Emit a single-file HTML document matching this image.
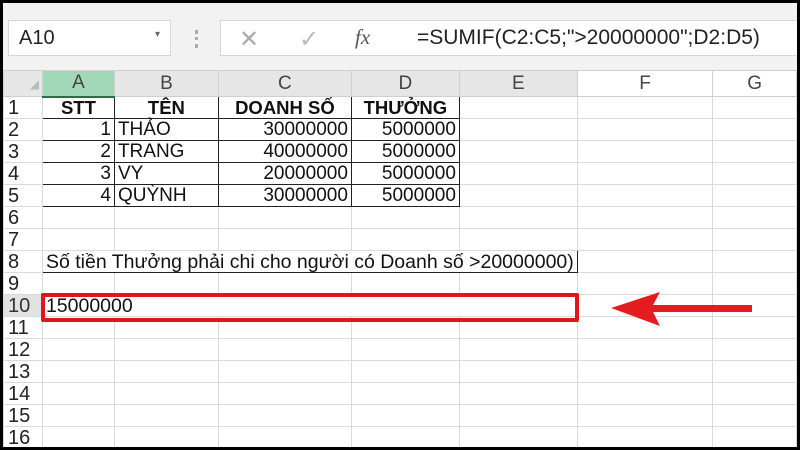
<!DOCTYPE html>
<html><head><meta charset="utf-8"><style>
*{margin:0;padding:0;box-sizing:border-box}
body{width:800px;height:450px;background:#000;position:relative;overflow:hidden;font-family:"Liberation Sans",Arial,sans-serif}
#frame{position:absolute;left:3px;top:3px;width:794px;height:444px;background:#fff;overflow:hidden}
#bar{position:absolute;left:0;top:0;width:794px;height:67px;background:#f2f2f2}
.box{position:absolute;background:#fff;border:1px solid #d6d6d6}
table{position:absolute;left:0;top:67px;border-collapse:collapse;table-layout:fixed}
td{height:22px;border:1px solid #dadada;font-size:19px;color:#111;padding:0 3px;white-space:nowrap;overflow:visible;line-height:20px}
tr.h td{height:26px;background:#e6e6e6;text-align:center;color:#444;font-size:19px;border-color:#cfcfcf}
td.r{text-align:left;padding-left:4px;font-size:20px;color:#222;border-color:#dadada}
.b{font-weight:bold;text-align:center;font-size:18.5px}
.n{text-align:right}
.k{border:1px solid #222 !important}
</style></head><body>
<div id="frame">
<div id="bar">
 <div class="box" style="left:5px;top:17px;width:163px;height:36px"><span style="position:absolute;left:10px;top:6px;font-size:20px;color:#222">A10</span><span style="position:absolute;left:146px;top:8px;font-size:10px;color:#666">▾</span></div>
 <div style="position:absolute;left:192px;top:27px;width:3px;height:18px;border-left:3px dotted #aaa"></div>
 <div class="box" style="left:217px;top:17px;width:180px;height:36px">
  <span style="position:absolute;left:18px;top:4px;font-size:24px;color:#aaa">✕</span>
  <span style="position:absolute;left:78px;top:4px;font-size:24px;color:#bbb">✓</span>
  <span style="position:absolute;left:134px;top:4px;font-size:21px;color:#555;font-family:'Liberation Serif',serif;font-style:italic">fx</span>
 </div>
 <div class="box" style="left:396px;top:17px;width:400px;height:36px;border-left:none"><span style="position:absolute;left:18px;top:5px;font-size:21px;color:#222">=SUMIF(C2:C5;"&gt;20000000";D2:D5)</span></div>
</div>
<table>
<colgroup><col style="width:39px"><col style="width:72px"><col style="width:104px"><col style="width:133px"><col style="width:108px"><col style="width:118px"><col style="width:136px"><col style="width:84px"></colgroup>
<tr class="h"><td style="background:#e6e6e6;color:#bbb;font-size:12px;text-align:right">◢</td><td style="background:#a0d8b8;border-bottom:2px solid #217346">A</td><td>B</td><td>C</td><td>D</td><td>E</td><td style="background:#fff">F</td><td style="background:#fff">G</td></tr>
<tr><td class="r">1</td><td class="b k">STT</td><td class="b k">TÊN</td><td class="b k">DOANH SỐ</td><td class="b k">THƯỞNG</td><td></td><td></td><td></td></tr>
<tr><td class="r">2</td><td class="n k">1</td><td class="k">THẢO</td><td class="n k">30000000</td><td class="n k">5000000</td><td></td><td></td><td></td></tr>
<tr><td class="r">3</td><td class="n k">2</td><td class="k">TRANG</td><td class="n k">40000000</td><td class="n k">5000000</td><td></td><td></td><td></td></tr>
<tr><td class="r">4</td><td class="n k">3</td><td class="k">VY</td><td class="n k">20000000</td><td class="n k">5000000</td><td></td><td></td><td></td></tr>
<tr><td class="r">5</td><td class="n k">4</td><td class="k">QUỲNH</td><td class="n k">30000000</td><td class="n k">5000000</td><td></td><td></td><td></td></tr>
<tr><td class="r">6</td><td></td><td></td><td></td><td></td><td></td><td></td><td></td></tr>
<tr><td class="r">7</td><td></td><td></td><td></td><td></td><td></td><td></td><td></td></tr>
<tr><td class="r">8</td><td colspan="5" class="k" style="font-size:19.5px">Số tiền Thưởng phải chi cho người có Doanh số &gt;20000000)</td><td></td><td></td></tr>
<tr><td class="r">9</td><td></td><td></td><td></td><td></td><td></td><td></td><td></td></tr>
<tr><td class="r" style="background:#e2e2e2;color:#333">10</td><td colspan="5" style="font-size:19.5px">15000000</td><td></td><td></td></tr>
<tr><td class="r">11</td><td></td><td></td><td></td><td></td><td></td><td></td><td></td></tr>
<tr><td class="r">12</td><td></td><td></td><td></td><td></td><td></td><td></td><td></td></tr>
<tr><td class="r">13</td><td></td><td></td><td></td><td></td><td></td><td></td><td></td></tr>
<tr><td class="r">14</td><td></td><td></td><td></td><td></td><td></td><td></td><td></td></tr>
<tr><td class="r">15</td><td></td><td></td><td></td><td></td><td></td><td></td><td></td></tr>
<tr><td class="r">16</td><td></td><td></td><td></td><td></td><td></td><td></td><td></td></tr>
</table>
<div style="position:absolute;left:38px;top:290px;width:538px;height:29px;border:4px solid #e0161b;border-radius:2px"></div>
<svg style="position:absolute;left:0;top:0" width="794" height="444"><polygon points="608,305 657,289 650,302 749,302 749,309 650,309 657,323" fill="#e41b1f"/></svg>
</div>
</body></html>
